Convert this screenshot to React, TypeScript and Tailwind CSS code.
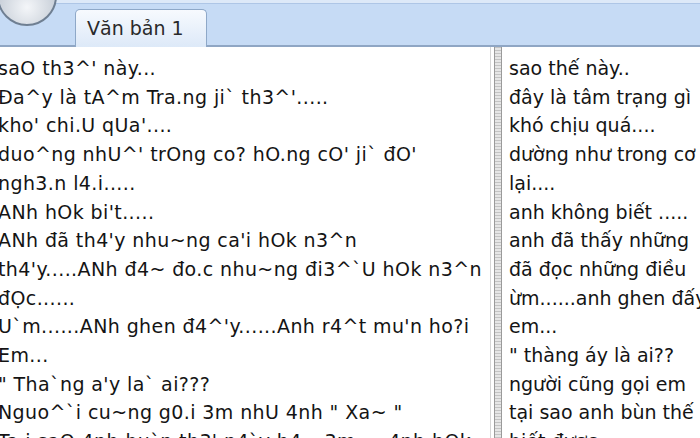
const leftLines = [
  "saO th3^' này...",
  "Đa^y là tA^m Tra.ng ji` th3^'.....",
  "kho' chi.U qUa'....",
  "duo^ng nhU^' trOng co? hO.ng cO' ji` đO'",
  "ngh3.n l4.i.....",
  "ANh hOk bi't.....",
  "ANh đã th4'y nhu~ng ca'i hOk n3^n",
  "th4'y.....ANh đ4~ đo.c nhu~ng đi3^`U hOk n3^n",
  "đỌc......",
  "U`m......ANh ghen đ4^'y......Anh r4^t mu'n ho?i",
  "Em...",
  "\" Tha`ng a'y la` ai???",
  "Nguo^`i cu~ng g0.i 3m nhU 4nh \" Xa~ \"",
  "Ta.i saO 4nh bu`n th3' n4`y h4~ 3m.....4nh hOk",
];

const rightLines = [
  "sao thế này..",
  "đây là tâm trạng gì",
  "khó chịu quá....",
  "dường như trong cơ",
  "lại....",
  "anh không biết .....",
  "anh đã thấy những",
  "đã đọc những điều",
  "ừm......anh ghen đấy",
  "em...",
  "\" thàng áy là ai??",
  "người cũng gọi em",
  "tại sao anh bùn thế",
  "biết được",
];

export default function App() {
  return (
    <div className="flex h-[438px] w-[700px] flex-col overflow-hidden bg-white">
      {/* ribbon strip */}
      <div className="relative flex h-[47px] shrink-0 items-end border-b-2 border-[#8fa6c4] bg-[#c6dbf5] pl-[75px]">
        <div className="absolute inset-x-0 top-0 h-[4px] border-b border-[#aec6e6] bg-[#dde9f8]" />
        <div className="absolute left-[-3px] top-[-34px] h-[60px] w-[60px] rounded-full border-2 border-[#6f7f92] bg-[radial-gradient(circle_at_50%_70%,#f4f6f9,#c9d0d9_60%,#9aa5b3)]" />
        <div className="relative -mb-[2px] flex h-[38px] w-[132px] items-center rounded-t-[5px] border border-b-0 border-[#8ea8c8] bg-gradient-to-b from-[#f7fafe] to-[#dde9f8] pl-[11px] font-['DejaVu_Sans',sans-serif] text-[19px] text-[#2a2a2a]">
          Văn bản 1
        </div>
      </div>

      <div className="flex flex-1 overflow-hidden">
        <div className="w-[490px] shrink-0 overflow-hidden pt-[7px] font-['DejaVu_Sans',sans-serif] text-[19px] leading-[28.7px] tracking-[0.4px] text-[#141414]">
          {leftLines.map((l, i) => (
            <div key={i} className="-ml-[2px] whitespace-pre">
              {l}
            </div>
          ))}
        </div>
        <div className="flex w-[13px] shrink-0">
          <div className="w-[4px] border-l border-[#d6d6d6]" />
          <div className="w-[8px] border-x border-[#9a9a9a] bg-[repeating-linear-gradient(0deg,#c4c4c4_0px,#c4c4c4_1px,#e6e6e6_1px,#e6e6e6_3px)]" />
        </div>
        <div className="flex-1 overflow-hidden pl-[6px] pt-[7px] font-['DejaVu_Sans',sans-serif] text-[19px] leading-[28.7px] text-[#141414]">
          {rightLines.map((l, i) => (
            <div key={i} className="whitespace-pre">
              {l}
            </div>
          ))}
        </div>
      </div>
    </div>
  );
}
